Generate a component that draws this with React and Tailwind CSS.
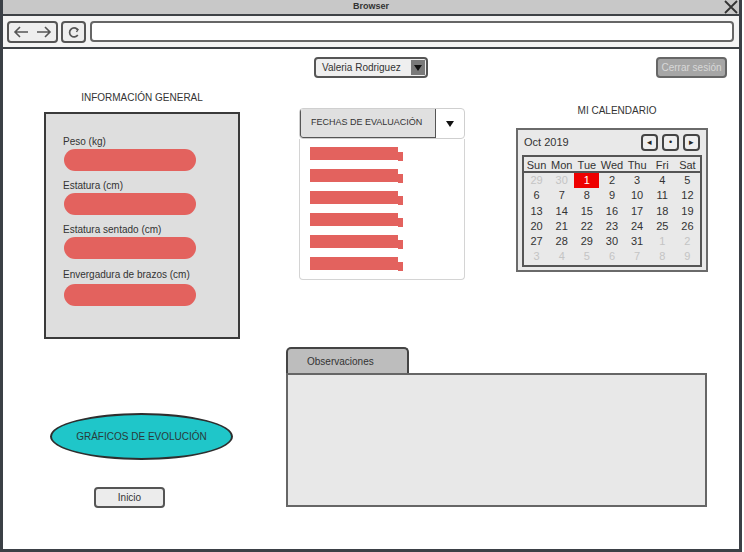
import React from "react";

const F = { fontFamily: '"Liberation Sans", Arial, sans-serif' };

function Pill() {
  return <div className="w-[132px] h-[22px] rounded-full bg-[#e3625e]" />;
}

function Bar() {
  return (
    <div className="flex items-end">
      <div className="w-[88px] h-[13px] bg-[#e3625e]" />
      <div className="w-[5px] h-[9px] bg-[#e3625e] mb-[-1px]" />
    </div>
  );
}

const weeks = [
  [["29", 1], ["30", 1], ["1", 2], ["2"], ["3"], ["4"], ["5"]],
  [["6"], ["7"], ["8"], ["9"], ["10"], ["11"], ["12"]],
  [["13"], ["14"], ["15"], ["16"], ["17"], ["18"], ["19"]],
  [["20"], ["21"], ["22"], ["23"], ["24"], ["25"], ["26"]],
  [["27"], ["28"], ["29"], ["30"], ["31"], ["1", 1], ["2", 1]],
  [["3", 1], ["4", 1], ["5", 1], ["6", 1], ["7", 1], ["8", 1], ["9", 1]],
];

export default function App() {
  return (
    <div className="w-[744px] h-[552px] bg-white text-[#333]" style={F}>
      <div className="w-[742px] h-[552px] border-x-[3px] border-b-[3px] border-[#3b4046] flex flex-col">
        {/* title bar */}
        <div className="h-[16px] bg-[#c8c8c8] border-b-2 border-[#3e4246] flex items-center justify-center relative">
          <span className="text-[9px] font-bold text-[#333]">Browser</span>
          <svg className="absolute right-[1px] top-[0px]" width="14" height="14" viewBox="0 0 14 14">
            <path d="M1 1 L13 13 M13 1 L1 13" stroke="#333" strokeWidth="1.8" fill="none" />
          </svg>
        </div>
        {/* toolbar */}
        <div className="h-[33px] bg-[#f4f4f4] border-b-2 border-[#3e4246] flex items-start pt-[5px] pl-[4px] pr-[2px] gap-[3px]">
          <div className="w-[51px] h-[22px] rounded-[4px] border-2 border-[#555] bg-[#eeeeee] flex items-center justify-center gap-[7px] text-[#555]">
            <svg width="16" height="12" viewBox="0 0 16 12"><path d="M15 6 H2 M7 1 L2 6 L7 11" stroke="#555" strokeWidth="1.6" fill="none" /></svg>
            <svg width="16" height="12" viewBox="0 0 16 12"><path d="M1 6 H14 M9 1 L14 6 L9 11" stroke="#555" strokeWidth="1.6" fill="none" /></svg>
          </div>
          <div className="w-[25px] h-[22px] rounded-[4px] border-2 border-[#555] bg-[#eeeeee] flex items-center justify-center">
            <svg width="12" height="13" viewBox="0 0 12 13"><path d="M9.5 3.5 A4.5 4.5 0 1 0 9.8 9" stroke="#555" strokeWidth="1.7" fill="none" /><path d="M7 2 L10 3.6 L8.5 6" stroke="#555" strokeWidth="1.4" fill="none" /></svg>
          </div>
          <div className="ml-[1px] w-[644px] h-[21px] rounded-[4px] border-2 border-[#666] bg-white" />
        </div>

        {/* content */}
        <div className="flex-1 bg-white flex flex-col">
          {/* top row */}
          <div className="flex items-start pt-[8px] h-[29px]">
            <div className="ml-[311px] w-[114px] h-[21px] rounded-[4px] border-2 border-[#555] bg-[#efefef] flex items-center pl-[6px] pr-[1px]">
              <span className="text-[10px] text-[#333] flex-1">Valeria Rodriguez</span>
              <div className="w-[14px] h-[15px] bg-[#7a7a7a] flex items-center justify-center">
                <svg width="8" height="6" viewBox="0 0 8 6"><path d="M0 0 H8 L4 6 Z" fill="#111" /></svg>
              </div>
            </div>
            <div className="ml-auto mr-[12px] w-[71px] h-[21px] rounded-[4px] border-2 border-[#666] bg-[#a6a6a6] flex items-center justify-center">
              <span className="text-[10px] text-[#d8d8d8]">Cerrar sesión</span>
            </div>
          </div>

          {/* main */}
          <div className="flex items-start">
            {/* left column */}
            <div className="ml-[41px] w-[196px] flex flex-col">
              <div className="mt-[13px] h-[14px] text-[10px] text-center leading-[14px]">INFORMACIÓN GENERAL</div>
              <div className="mt-[7px] h-[227px] border-2 border-[#3a3a3a] bg-[#dedede] pt-[21px] pl-[18px] flex flex-col gap-[8px]">
                {["Peso (kg)", "Estatura (cm)", "Estatura sentado (cm)", "Envergadura de brazos (cm)"].map((l, i) => (
                  <div key={l} className={i === 3 ? "mt-[1px]" : ""}>
                    <div className="h-[14px] text-[10px] leading-[14px] text-[#333] -ml-[1px]">{l}</div>
                    <div className={i === 3 ? "mt-[2px]" : ""}><Pill /></div>
                  </div>
                ))}
              </div>
              <div className="mt-[74px] ml-[6px] w-[183px] h-[47px] rounded-[50%] border-2 border-[#2e2e2e] bg-[#1fc6c9] flex items-center justify-center">
                <span className="text-[10px] text-[#2a3a3a]">GRÁFICOS DE EVOLUCIÓN</span>
              </div>
              <div className="mt-[27px] ml-[50px] w-[71px] h-[21px] rounded-[4px] border-2 border-[#555] bg-[#ececec] flex items-center justify-center">
                <span className="text-[10px] text-[#333]">Inicio</span>
              </div>
            </div>

            {/* right area */}
            <div className="ml-[46px] w-[422px] flex flex-col">
              <div className="flex items-start h-[202px]">
                {/* combo */}
                <div className="ml-[13px] w-[166px] mt-[30px] flex flex-col">
                  <div className="h-[31px] flex rounded-[4px] border border-[#cfcfcf] bg-white overflow-hidden">
                    <div className="w-[136px] h-full bg-[#e0e0e0] border-r border-b border-l border-[#555] rounded-bl-[3px] flex items-center pl-[10px]">
                      <span className="text-[9px] text-[#333]">FECHAS DE EVALUACIÓN</span>
                    </div>
                    <div className="flex-1 flex items-center justify-center">
                      <svg width="8" height="6" viewBox="0 0 8 6"><path d="M0 0 H8 L4 6 Z" fill="#111" /></svg>
                    </div>
                  </div>
                  <div className="h-[141px] border border-t-0 border-[#d4d4d4] rounded-b-[4px] bg-white pt-[8px] pl-[10px] flex flex-col gap-[9px]">
                    <Bar /><Bar /><Bar /><Bar /><Bar /><Bar />
                  </div>
                </div>
                {/* calendar */}
                <div className="ml-[51px] w-[192px] flex flex-col">
                  <div className="mt-[26px] h-[14px] leading-[14px] text-[10px] text-center pl-[10px]">MI CALENDARIO</div>
                  <div className="mt-[10px] h-[144px] border-2 border-[#6a6a6a] bg-[#e9e9e9] px-[4px] flex flex-col">
                    <div className="h-[25px] flex items-center">
                      <span className="text-[11px] text-[#333] flex-1 pl-[2px]">Oct 2019</span>
                      <div className="flex gap-[4px] mr-[2px]">
                        {["◂", "•", "▸"].map((g) => (
                          <div key={g} className="w-[17px] h-[17px] rounded-[4px] border-2 border-[#444] bg-[#eeeeee] flex items-center justify-center text-[9px] text-[#222] leading-none">{g}</div>
                        ))}
                      </div>
                    </div>
                    <div className="h-[112px] border-2 border-[#555] bg-[#e9e9e9] flex flex-col">
                      <div className="h-[16px] grid grid-cols-7 border-b-2 border-[#555] text-[11px] text-[#333] items-center text-center leading-[16px]">
                        {["Sun", "Mon", "Tue", "Wed", "Thu", "Fri", "Sat"].map((d) => (
                          <div key={d}>{d}</div>
                        ))}
                      </div>
                      {weeks.map((w, i) => (
                        <div key={i} className="h-[15.3px] grid grid-cols-7 text-[11px] text-center leading-[15px]">
                          {w.map(([n, s], j) => (
                            <div key={j} className={s === 2 ? "bg-[#ee0000] text-white" : s === 1 ? "text-[#c4c4c4]" : "text-[#333]"}>{n}</div>
                          ))}
                        </div>
                      ))}
                    </div>
                  </div>
                </div>
              </div>

              {/* tabs */}
              <div className="mt-[67px] flex flex-col">
                <div className="w-[123px] h-[26px] rounded-t-[5px] border-2 border-b-0 border-[#444] bg-[#bdbdbd] flex items-center pl-[19px]">
                  <span className="text-[10px] text-[#333]">Observaciones</span>
                </div>
                <div className="w-[421px] h-[134px] border-2 border-[#666] bg-[#e8e8e8]" />
              </div>
            </div>
          </div>
        </div>
      </div>
    </div>
  );
}
